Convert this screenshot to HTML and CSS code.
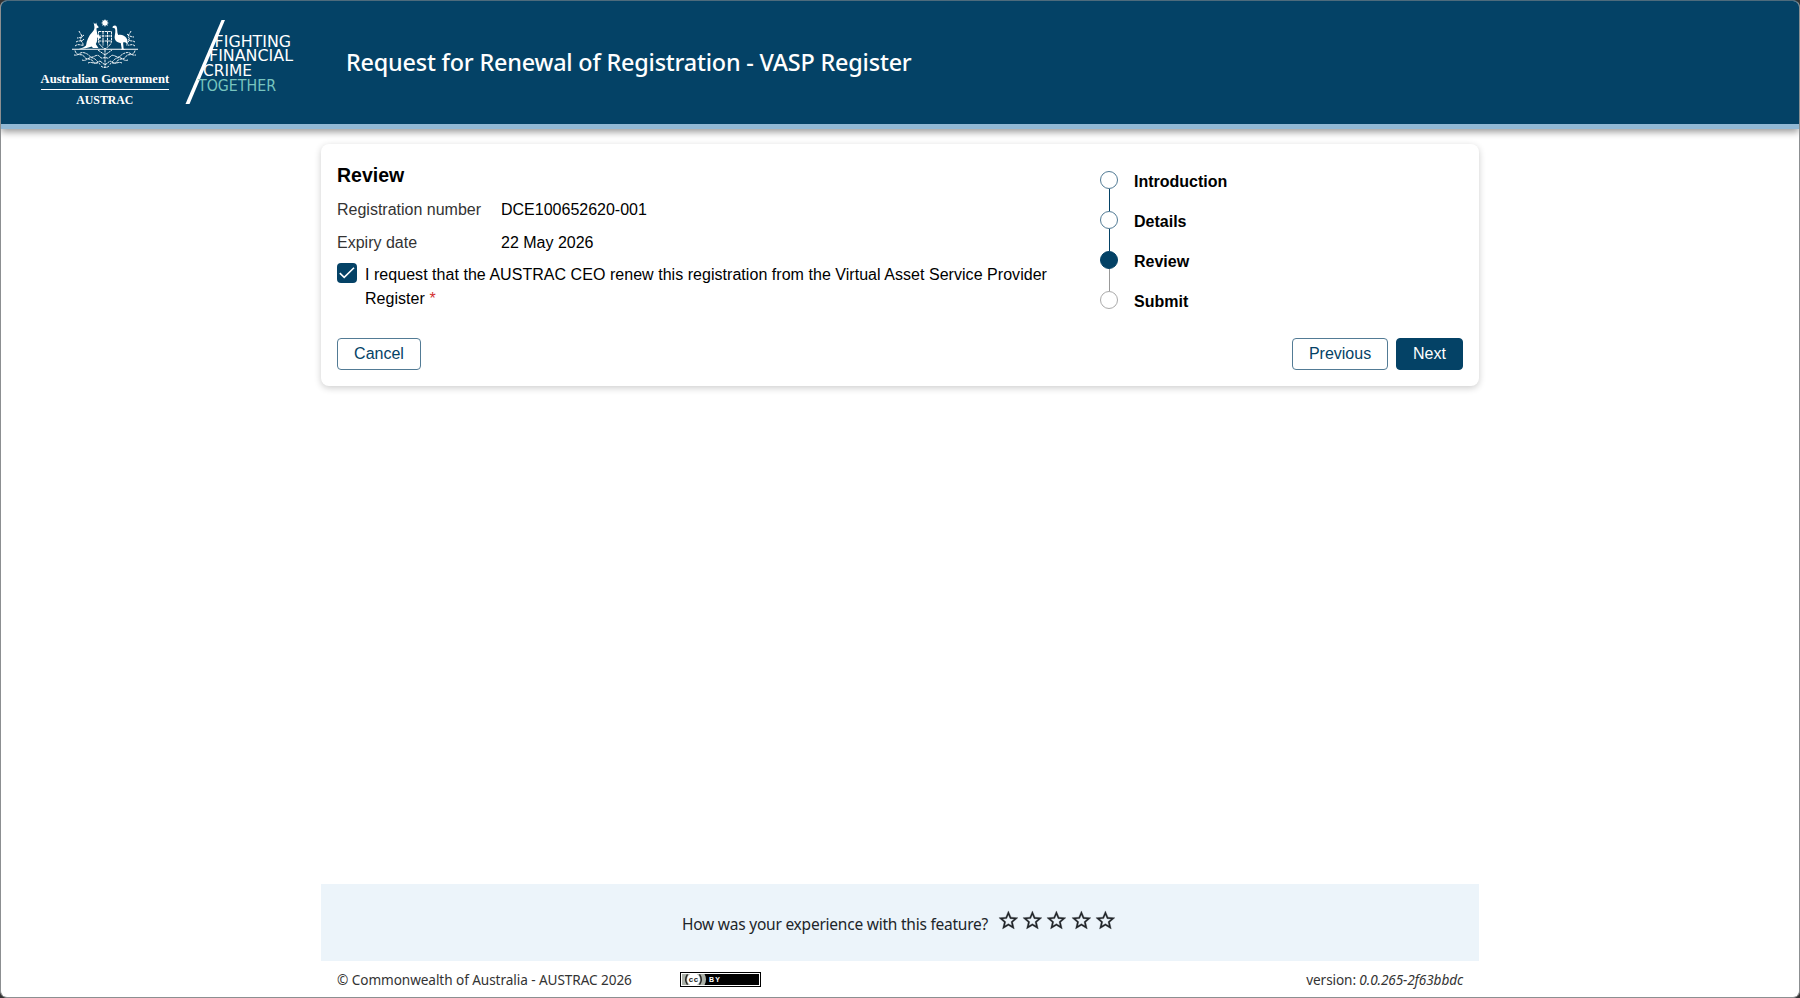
FILE: index.html
```html
<!DOCTYPE html>
<html lang="en">
<head>
<meta charset="utf-8">
<title>Request for Renewal of Registration - VASP Register</title>
<link rel="stylesheet" href="styles.css">
</head>
<body>
<div class="window">
  <header class="header">
    <svg class="logo" width="260" height="100" viewBox="40 14 260 100" role="img">
      <g fill="#fff">
        <circle cx="105" cy="22.500" r="2.300"/>
        <path d="M105 19l.9 2 2-.8-.8 2 1.900.800-1.900.800.8 2-2-.8-.9 2-.9-2-2 .8.8-2-1.900-.8 1.900-.8-.8-2 2 .8z"/>
        <path d="M93.600 22.500l1.600 1.800.9-1.900.9 2.600 1.900 2.200-2.500 1.300c.4 2.500.5 4.500 1.300 6.500l3.500 2.500-1.200 1.300-2.800-1.200c.4 3-.4 5-1.400 6.500l2.600 3.900h-5.400l-1.400-1.500c-4 1.500-8 2.500-13 2.500 3.500-1 6-1.800 7.400-3.500.8-5 2.500-9.500 6.400-13.500 2-2 2.300-4 1.900-6z"/>
        <path d="M112.300 27.600c.6-2.600 3.700-2.900 4.500-.6.8 2.800 0 5.500 1.400 8 3.300-.9 6.600.6 8.200 3 1.200 2 1.400 4.200.9 6.200-1.300-2-2.800-2.400-4.200-1.700l.5 6.200 2.300 1h-5l.8-1.200-1-5.500c-3.800-.5-6.600-3-6-6.800.5-3 1-5 .3-7.600z"/>
        <path d="M72 48.800h66v1H72z"/>
      </g>
      <g class="crest-lines">
        <path d="M98.500 31.500h13v9c0 4-3 6-6.500 8.500-3.500-2.500-6.500-4.500-6.500-8.500zM98.500 36h13M103 31.500v14M107.500 31.500v14M98.500 41h13"/>
        <path d="M79 31c1 3 4 4 2 7s3 4 2 8M84 35c-2 2-4 3-7 3M76 42c3-2 6 0 8-3M75 46c4-3 6 0 8-1"/>
        <path d="M131 31c-1 3-4 4-2 7s-3 4-2 8M127 34c2 2 4 3 7 3M135 42c-3-2-5 0-7-3M135 46c-4-3-5 0-7-1"/>
        <path d="M75 50.500c2 7 7 2 9 6s7 1 9 5 6-1 7 3M135 50.500c-2 7-7 2-9 6s-7 1-9 5-6-1-7 3"/>
        <path d="M74 55c6 1 5-4 11-2s4 6 10 3 4 5 10 1c6 4 4-4 10-1s4-1 10-3 5 3 11 2"/>
        <path d="M82 60c5 2 6-4 11-2s3 5 7 3M128 60c-5 2-6-4-11-2s-3 5-7 3M88 63c4-2 6 2 10-1M122 63c-4-2-6 2-10-1M101 66c2 2 6 2 8 0M105 50v17M98 50l7 5 7-5M100 61l5 4 5-4"/>
      </g>
      <g fill="#fff" font-family="'Liberation Serif', serif" font-weight="700" font-size="12.800">
        <text x="40.600" y="83" textLength="128.500" lengthAdjust="spacingAndGlyphs">Australian Government</text>
        <text x="76.300" y="104" textLength="57" lengthAdjust="spacingAndGlyphs">AUSTRAC</text>
        <path d="M41 89h128v1H41z"/>
      </g>
      <path fill="#fff" d="M221.500 20h3.500L189.500 104h-4z"/>
      <g fill="#fff" font-family="'DejaVu Sans', sans-serif" font-size="15.600">
        <text x="214.600" y="46.500" textLength="76.500" lengthAdjust="spacingAndGlyphs">FIGHTING</text>
        <text x="209" y="61.300" textLength="84" lengthAdjust="spacingAndGlyphs">FINANCIAL</text>
        <text x="203" y="76" textLength="49" lengthAdjust="spacingAndGlyphs">CRIME</text>
        <text x="198" y="90.800" fill="#77c5bf" textLength="78" lengthAdjust="spacingAndGlyphs">TOGETHER</text>
      </g>
    </svg>
    <h1 class="title">Request for Renewal of Registration - VASP Register</h1>
  </header>

  <main class="card">
    <div class="card-body">
      <section class="review">
        <h2 class="heading">Review</h2>
        <dl class="fields">
          <dt>Registration number</dt><dd>DCE100652620-001</dd>
          <dt>Expiry date</dt><dd>22 May 2026</dd>
        </dl>
        <label class="consent">
          <span class="checkbox">
            <svg width="20" height="20" viewBox="0 0 20 20"><path d="M2.800 10.200l4.400 4.100L17 4.800" fill="none" stroke="#fff" stroke-width="1.600"/></svg>
          </span>
          <span>I request that the AUSTRAC CEO renew this registration from the Virtual Asset Service Provider Register <span class="required">*</span></span>
        </label>
      </section>
      <ol class="steps">
        <li class="step done"><span class="dot"></span>Introduction</li>
        <li class="step done"><span class="dot"></span>Details</li>
        <li class="step current"><span class="dot"></span>Review</li>
        <li class="step"><span class="dot"></span>Submit</li>
      </ol>
    </div>
    <div class="actions">
      <button class="btn cancel">Cancel</button>
      <button class="btn previous">Previous</button>
      <button class="btn primary">Next</button>
    </div>
  </main>

  <section class="feedback">
    <span class="question">How was your experience with this feature?</span>
    <span class="stars">
      <svg class="star" viewBox="0 0 24 24"><use href="#star"/></svg>
      <svg class="star" viewBox="0 0 24 24"><use href="#star"/></svg>
      <svg class="star" viewBox="0 0 24 24"><use href="#star"/></svg>
      <svg class="star" viewBox="0 0 24 24"><use href="#star"/></svg>
      <svg class="star" viewBox="0 0 24 24"><path id="star" d="M22 9.240l-7.190-.62L12 2 9.190 8.630 2 9.240l5.460 4.730L5.820 21 12 17.270 18.180 21l-1.630-7.030L22 9.240zM12 15.400l-3.760 2.270 1-4.280-3.320-2.880 4.380-.38L12 6.100l1.710 4.040 4.380.38-3.320 2.880 1 4.280L12 15.400z"/></svg>
    </span>
  </section>

  <footer class="footer">
    <span class="copyright">© Commonwealth of Australia - AUSTRAC 2026</span>
    <svg class="licence" width="81" height="15" viewBox="0 0 81 15" role="img">
      <path fill="#000" d="M0 0h81v15H0z"/>
      <path fill="#fff" d="M1 1h79v13H1z"/>
      <path fill="#abb1a8" d="M2 2h24v11H2z"/>
      <path fill="#000" d="M25 2h54v11H24.500c2-3.500 2-7.500 0-11z"/>
      <circle cx="13.500" cy="7.500" r="6.500" fill="#fff"/>
      <path d="M7.500 2.300q-3.500 5.200 0 10.400M19.500 2.300q3.500 5.200 0 10.400" fill="none" stroke="#222" stroke-width="1.400"/>
      <text x="8.800" y="10" class="cc" textLength="9.500">cc</text>
      <text x="29" y="10" class="by" textLength="11">BY</text>
    </svg>
    <span class="version">version: <em>0.0.265-2f63bbdc</em></span>
  </footer>
</div>
</body>
</html>
```
FILE: styles.css
```css
* { box-sizing: border-box; }
body { margin: 0; background: #333; }
.window {
  display: flex;
  flex-direction: column;
  height: 998px;
  border: 1px solid #8c8f91;
  border-top-color: #4e6b7c;
  border-radius: 7px;
  overflow: hidden;
  background: #fff;
  font: 16px/24px "Liberation Sans", Arial, sans-serif;
  color: #000;
}
.header {
  display: flex;
  flex: none;
  height: 128px;
  padding: 13px 0 0 39px;
  background: #044266;
  border-bottom: 5px solid #92b9d5;
  box-shadow: 0 3px 7px rgba(0, 0, 0, .4);
}
.logo { flex: none; }
.crest-lines {
  fill: none;
  stroke: #fff;
  stroke-width: .95;
  stroke-dasharray: 2.600 .6;
}
.title {
  margin: 32px 0 0 46px;
  font: 500 23.400px/32px "Noto Sans", sans-serif;
  letter-spacing: -.2px;
  white-space: nowrap;
  color: #fff;
}
.card {
  width: 1158px;
  height: 242px;
  margin: 15px auto 0;
  padding: 19px 16px 15px;
  border-radius: 8px;
  background: #fff;
  box-shadow: 0 2px 7px rgba(0, 0, 0, .2);
}
.card-body { display: flex; height: 175px; }
.review { width: 763px; }
.heading { margin: 0 0 11px; font-size: 19.500px; line-height: 24px; }
.fields {
  display: grid;
  grid-template-columns: 164px 1fr;
  row-gap: 8.500px;
  margin: 0;
}
.fields dt { color: #333; }
.fields dd { margin: 0; }
.consent {
  display: flex;
  gap: 8px;
  width: 725px;
  margin-top: 8px;
  letter-spacing: .04px;
}
.checkbox {
  flex: none;
  width: 20px;
  height: 20px;
  border-radius: 4px;
  background: #044266;
}
.checkbox svg { display: block; }
.required { color: #d32f2f; }
.steps {
  margin: 8px 0 0;
  padding: 0;
  list-style: none;
  font-weight: 700;
}
.step { display: flex; gap: 16px; height: 40px; line-height: 22px; }
.dot {
  position: relative;
  width: 18px;
  height: 18px;
  border: 1px solid #aaa;
  border-radius: 50%;
}
.step:not(:last-child) .dot::after {
  content: "";
  position: absolute;
  left: 8px;
  top: 17px;
  width: 1px;
  height: 22px;
  background: #999;
}
.done .dot { border-color: #527b95; }
.step.done:not(:last-child) .dot::after { background: #044266; }
.current .dot { background: #044266; border-color: #044266; }
.actions { display: flex; gap: 8px; }
.btn {
  height: 32px;
  padding: 0;
  border: 1px solid #527b95;
  border-radius: 4px;
  background: #fff;
  color: #044266;
  font: 16px/30px "Liberation Sans", Arial, sans-serif;
}
.cancel { width: 84px; margin-right: auto; }
.previous { width: 96px; }
.primary { width: 67px; border-color: #044266; background: #044266; color: #fff; }
.feedback {
  display: flex;
  width: 1158px;
  height: 77px;
  margin: auto auto 0;
  padding: 28px 0 0 361px;
  background: #ecf4fa;
  font-family: "Noto Sans", sans-serif;
  color: #212529;
}
.question { width: 315px; font-size: 15.500px; letter-spacing: -.23px; white-space: nowrap; }
.stars { display: flex; gap: 1.400px; margin-top: -3px; }
.star { width: 22.800px; height: 22.800px; fill: #212529; stroke: #212529; stroke-width: .3; }
.footer {
  display: flex;
  width: 1126px;
  height: 36px;
  margin: 0 auto;
  padding-top: 7px;
  font: 13.600px/24px "Noto Sans", sans-serif;
  color: #333;
  white-space: nowrap;
}
.copyright { width: 343px; letter-spacing: -.07px; }
.licence { margin-top: 4px; }
.version { margin-left: auto; letter-spacing: -.1px; }
.cc { font: 700 8px "Liberation Sans", sans-serif; fill: #222; }
.by { font: 700 7px "Liberation Sans", sans-serif; fill: #fff; }
```
